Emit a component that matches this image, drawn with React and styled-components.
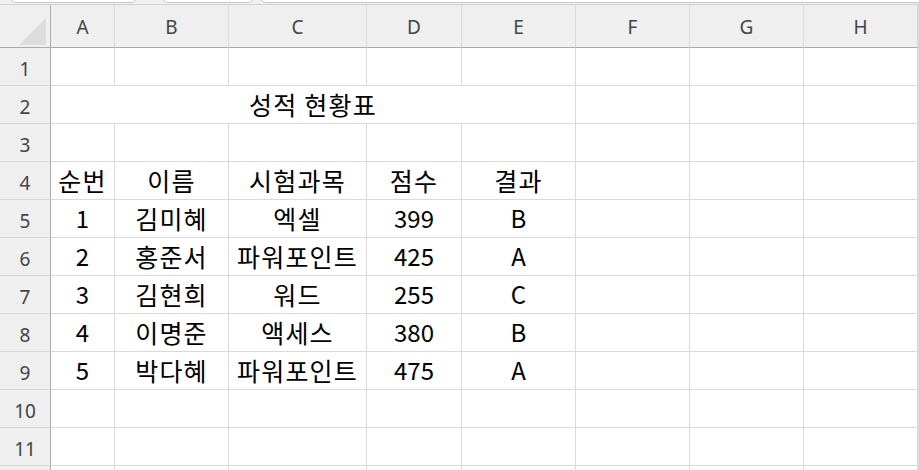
import styled, { createGlobalStyle } from "styled-components";

const GlobalStyle = createGlobalStyle`
  html, body { margin: 0; padding: 0; background: #ffffff; }
  body { overflow: hidden; }
`;

const COLS = [
  { key: "A", w: 64 },
  { key: "B", w: 114 },
  { key: "C", w: 138 },
  { key: "D", w: 95 },
  { key: "E", w: 114 },
  { key: "F", w: 114 },
  { key: "G", w: 114 },
  { key: "H", w: 114 },
];

const DATA = {
  2: { title: "성적 현황표" },
  4: ["순번", "이름", "시험과목", "점수", "결과"],
  5: ["1", "김미혜", "엑셀", "399", "B"],
  6: ["2", "홍준서", "파워포인트", "425", "A"],
  7: ["3", "김현희", "워드", "255", "C"],
  8: ["4", "이명준", "액세스", "380", "B"],
  9: ["5", "박다혜", "파워포인트", "475", "A"],
};

const isHangul = (s) => /[\uac00-\ud7a3]/.test(s || "");

const Page = styled.div`
  width: 919px;
  height: 470px;
  overflow: hidden;
  background: #efefef;
`;

const TabStrip = styled.div`
  display: flex;
  height: 4px;
  border-bottom: 1px solid #d2d2d2;
  overflow: hidden;
`;

const Tab = styled.div`
  flex: 0 0 ${(p) => p.$w}px;
  margin-left: ${(p) => p.$ml}px;
  height: 20px;
  margin-top: -17px;
  background: #ffffff;
  border: 1px solid #c8c8c8;
  border-radius: 6px;
  box-sizing: border-box;
`;

const Grid = styled.div`
  display: grid;
  grid-template-columns: 51px ${COLS.map((c) => c.w + "px").join(" ")} 1fr;
  grid-auto-rows: 38px;
  grid-template-rows: 43px;
`;

const Corner = styled.div`
  background: #efefef;
  border-right: 1px solid #ababab;
  border-bottom: 1px solid #ababab;
  display: flex;
  align-items: flex-end;
  justify-content: flex-end;
  padding: 0 4px 2px 0;
  box-sizing: border-box;
`;

const CornerMark = styled.div`
  width: 27px;
  height: 27px;
  background: #dcdcdc;
  clip-path: polygon(100% 0, 100% 100%, 0 100%);
`;

const ColHead = styled.div`
  background: #efefef;
  border-right: 1px solid #d9d9d9;
  border-bottom: 1px solid #ababab;
  display: flex;
  align-items: center;
  justify-content: center;
  padding-top: 2px;
  box-sizing: border-box;
  font-family: "Noto Sans", "Open Sans", sans-serif;
  font-size: 19px;
  color: #444444;
`;

const RowHead = styled.div`
  background: #efefef;
  border-right: 1px solid #ababab;
  border-bottom: 1px solid #dadada;
  display: flex;
  align-items: center;
  justify-content: center;
  padding-top: 4px;
  box-sizing: border-box;
  font-family: "Noto Sans", "Open Sans", sans-serif;
  font-size: 19px;
  color: #444444;
`;

const Cell = styled.div`
  background: #ffffff;
  border-right: 1px solid #dadada;
  border-bottom: 1px solid #dadada;
  grid-column: span ${(p) => p.$span || 1};
  display: flex;
  align-items: center;
  justify-content: center;
  padding-bottom: 2px;
  box-sizing: border-box;
  font-family: "Malgun Gothic", "Noto Sans CJK KR", sans-serif;
  font-size: ${(p) => (p.$ko ? 25 : 24)}px;
  letter-spacing: ${(p) => (p.$ko ? 1.2 : 0)}px;
  color: #000000;
  white-space: nowrap;
`;

function Row({ n, label = true }) {
  const d = DATA[n];
  if (d && d.title) {
    return (
      <>
        <RowHead>{n}</RowHead>
        <Cell $span={5} $ko>
          {d.title}
        </Cell>
        {COLS.slice(5).map((c) => (
          <Cell key={c.key} />
        ))}
        <Cell />
      </>
    );
  }
  return (
    <>
      <RowHead>{label ? n : null}</RowHead>
      {COLS.map((c, i) => (
        <Cell key={c.key} $ko={isHangul(d && d[i])}>
          {d ? d[i] : null}
        </Cell>
      ))}
      <Cell />
    </>
  );
}

export default function App() {
  const rows = Array.from({ length: 11 }, (_, i) => i + 1);
  return (
    <Page>
      <GlobalStyle />
      <TabStrip>
        <Tab $ml={10} $w={127} />
        <Tab $ml={25} $w={92} />
        <Tab $ml={6} $w={700} />
      </TabStrip>
      <Grid>
        <Corner>
          <CornerMark />
        </Corner>
        {COLS.map((c) => (
          <ColHead key={c.key}>{c.key}</ColHead>
        ))}
        <ColHead />
        {rows.map((n) => (
          <Row key={n} n={n} />
        ))}
        <Row n={12} label={false} />
      </Grid>
    </Page>
  );
}
